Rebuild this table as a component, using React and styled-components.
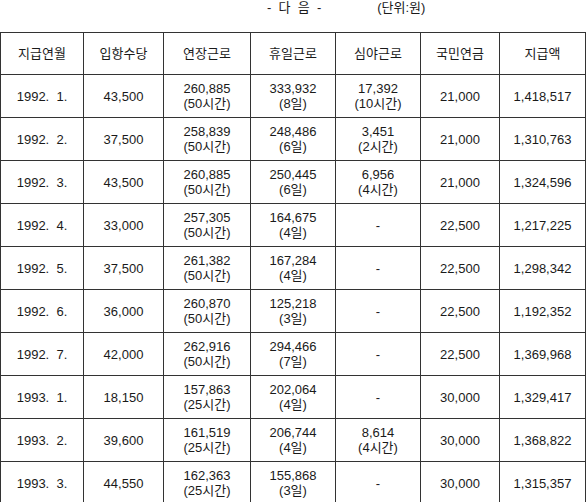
import React from 'react'
import styled, { createGlobalStyle } from 'styled-components'

const rows = [
  ['1992.  1.', '43,500', ['260,885', '(50시간)'], ['333,932', '(8일)'], ['17,392', '(10시간)'], '21,000', '1,418,517'],
  ['1992.  2.', '37,500', ['258,839', '(50시간)'], ['248,486', '(6일)'], ['3,451', '(2시간)'], '21,000', '1,310,763'],
  ['1992.  3.', '43,500', ['260,885', '(50시간)'], ['250,445', '(6일)'], ['6,956', '(4시간)'], '21,000', '1,324,596'],
  ['1992.  4.', '33,000', ['257,305', '(50시간)'], ['164,675', '(4일)'], '-', '22,500', '1,217,225'],
  ['1992.  5.', '37,500', ['261,382', '(50시간)'], ['167,284', '(4일)'], '-', '22,500', '1,298,342'],
  ['1992.  6.', '36,000', ['260,870', '(50시간)'], ['125,218', '(3일)'], '-', '22,500', '1,192,352'],
  ['1992.  7.', '42,000', ['262,916', '(50시간)'], ['294,466', '(7일)'], '-', '22,500', '1,369,968'],
  ['1993.  1.', '18,150', ['157,863', '(25시간)'], ['202,064', '(4일)'], '-', '30,000', '1,329,417'],
  ['1993.  2.', '39,600', ['161,519', '(25시간)'], ['206,744', '(4일)'], ['8,614', '(4시간)'], '30,000', '1,368,822'],
  ['1993.  3.', '44,550', ['162,363', '(25시간)'], ['155,868', '(3일)'], '-', '30,000', '1,315,357'],
]

const headers = ['지급연월', '입항수당', '연장근로', '휴일근로', '심야근로', '국민연금', '지급액']
const widths = [83, 80, 87, 85, 85, 79, 86]

export default function App() {
  return (
    <Page>
      <Global />
      <Caption>
        <span>-  다  음  -</span>
        <Unit>(단위:원)</Unit>
      </Caption>
      <Table>
        <colgroup>
          {widths.map((w, i) => <col key={i} style={{ width: w }} />)}
        </colgroup>
        <thead>
          <tr>
            {headers.map(h => <Head key={h}>{h}</Head>)}
          </tr>
        </thead>
        <tbody>
          {rows.map(r => (
            <tr key={r[0]}>
              {r.map((c, i) => (
                <Cell key={i}>
                  {Array.isArray(c) ? <>{c[0]}<br />{c[1]}</> : c}
                </Cell>
              ))}
            </tr>
          ))}
        </tbody>
      </Table>
    </Page>
  )
}

const Global = createGlobalStyle`
  body {
    margin: 0;
    background: #fff;
    font-family: "Liberation Sans", "Noto Sans CJK KR", sans-serif;
    color: #1a1a1a;
  }
`

const Page = styled.div`
  width: 587px;
`

const Caption = styled.div`
  height: 32px;
  display: flex;
  align-items: flex-start;
  padding-left: 267px;
  font-size: 13px;
  line-height: 16px;
  white-space: pre;
`

const Unit = styled.span`
  margin-left: 56px;
`

const Table = styled.table`
  border-collapse: collapse;
  table-layout: fixed;
  width: 586px;
  font-size: 13px;
  line-height: 15px;
`

const Head = styled.th`
  font-weight: normal;
  height: 41px;
  padding: 0;
  text-align: center;
  border: 1px solid #333;
`

const Cell = styled.td`
  height: 42px;
  padding: 0;
  text-align: center;
  vertical-align: middle;
  white-space: pre;
  border: 1px solid #333;
`
